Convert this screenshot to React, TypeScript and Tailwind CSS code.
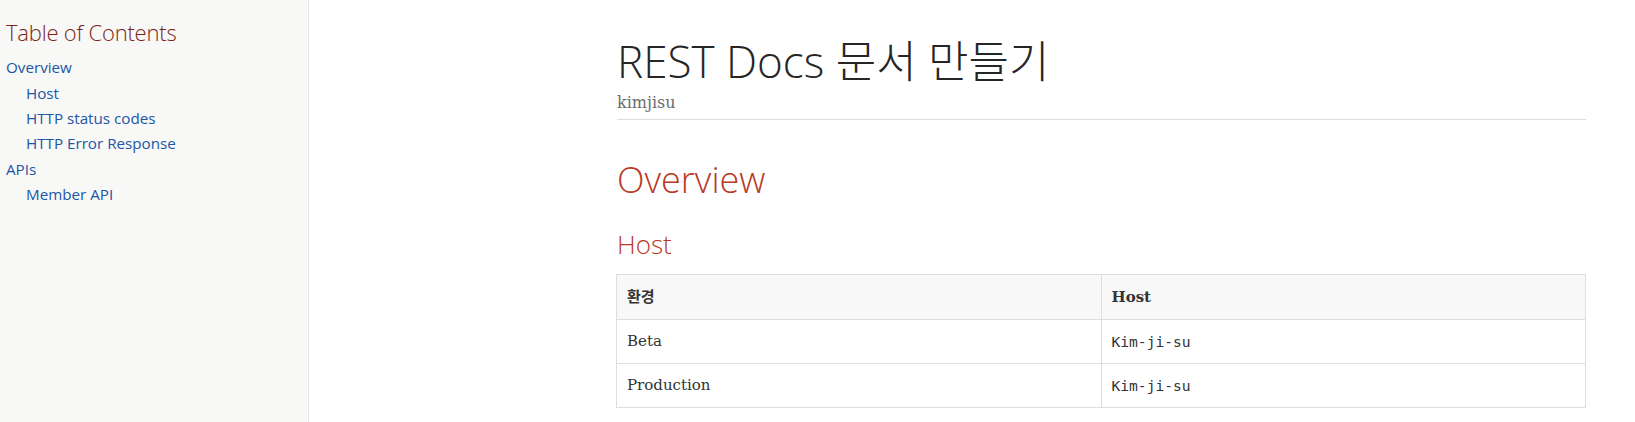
const toc = [
  { label: "Overview", children: ["Host", "HTTP status codes", "HTTP Error Response"] },
  { label: "APIs", children: ["Member API"] },
];

const hosts = [
  { env: "Beta", host: "Kim-ji-su" },
  { env: "Production", host: "Kim-ji-su" },
];

const sans = "font-['Open_Sans','Noto_Sans_CJK_KR',sans-serif]";
const serif = "font-['DejaVu_Serif','Noto_Sans_CJK_KR',serif]";

export default function App() {
  return (
    <div className="flex min-h-[422px] w-full bg-white">
      {/* Sidebar TOC */}
      <aside className="w-[309px] shrink-0 border-r border-[#e9e9e7] bg-[#f8f8f7] pl-[6px] pt-[19px]">
        <div className={`${sans} text-[22px] font-light leading-[1.2] tracking-[-0.2px] text-[#7a2518]`}>
          Table of Contents
        </div>
        <ul className={`${sans} mt-[10px] text-[15.2px] leading-[25.33px] text-[#2156a5]`}>
          {toc.map((s) => (
            <li key={s.label}>
              <span>{s.label}</span>
              <ul className="ml-[20px]">
                {s.children.map((c) => (
                  <li key={c}>{c}</li>
                ))}
              </ul>
            </li>
          ))}
        </ul>
      </aside>

      {/* Main content */}
      <main className="flex-1 pl-[308px] pr-[49px] pt-[35px]">
        <div className="w-[969px]">
          <div className="border-b border-[#dddddf] pb-[4px]">
            <h1 className={`${sans} text-[44px] font-light leading-[1.2] text-[#262626]`}>
              REST Docs 문서 만들기
            </h1>
            <div className={`${serif} mt-[3px] text-[16px] leading-[24px] text-[#6b6b6b]`}>
              kimjisu
            </div>
          </div>

          <h2 className={`${sans} mt-[38px] text-[36px] font-light leading-[1.2] text-[#ba3925]`}>
            Overview
          </h2>
          <h3 className={`${sans} mt-[28px] text-[26px] font-light leading-[1.2] text-[#ba3925]`}>
            Host
          </h3>

          <table className="mt-[14px] ml-[-1px] w-[970px] table-fixed border-collapse border border-[#dedede]">
            <thead>
              <tr className="bg-[#f7f8f7]">
                <th className={`${serif} border border-[#dedede] px-[10px] py-[10px] text-left text-[15px] font-bold leading-[24px] text-[#333]`}>
                  환경
                </th>
                <th className={`${serif} border border-[#dedede] px-[10px] py-[10px] text-left text-[15px] font-bold leading-[24px] text-[#333]`}>
                  Host
                </th>
              </tr>
            </thead>
            <tbody>
              {hosts.map((h) => (
                <tr key={h.env}>
                  <td className={`${serif} border border-[#dedede] px-[10px] py-[10px] text-[15px] leading-[23px] text-[#333]`}>
                    {h.env}
                  </td>
                  <td className="border border-[#dedede] px-[10px] py-[10px] font-['DejaVu_Sans_Mono',monospace] text-[14.6px] leading-[23px] text-[#333]">
                    {h.host}
                  </td>
                </tr>
              ))}
            </tbody>
          </table>
        </div>
      </main>
    </div>
  );
}
